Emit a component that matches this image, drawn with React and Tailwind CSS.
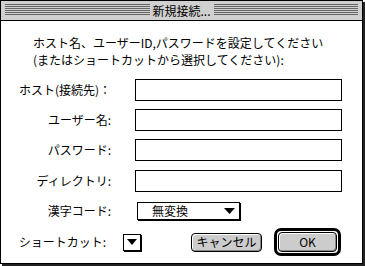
import React from "react";

const font = { fontFamily: '"Noto Sans CJK JP", "Noto Sans", sans-serif' };

function Lines() {
  return (
    <div className="flex-1 flex flex-col gap-[1px]">
      {[0, 1, 2, 3, 4, 5].map((i) => (
        <div key={i} className="h-[1px] bg-[#666666]" />
      ))}
    </div>
  );
}

function Tri({ w = 10, h = 6 }) {
  return (
    <svg width={w} height={h} viewBox={`0 0 ${w} ${h}`}>
      <polygon points={`0,0 ${w},0 ${w / 2},${h}`} fill="#000" />
    </svg>
  );
}

function Field({ label, extra = "" }) {
  return (
    <div className={`flex items-center ${extra}`}>
      <div className="w-[110px] text-right text-[12px] leading-[14px] text-black">{label}</div>
      <div className="ml-[24px] w-[207px] h-[22px] border border-black bg-white" />
    </div>
  );
}

export default function App() {
  return (
    <div className="w-[365px] h-[266px] bg-white" style={font}>
      <div className="w-[363px] h-[264px] border border-black bg-white shadow-[2px_2px_0_#222222] flex flex-col">
        <div className="h-[20px] bg-[#d0d0d0] border-b border-black flex items-start px-[4px] pt-[3px]">
          <Lines />
          <div className="px-[3px] -mt-[3px] h-[19px] flex items-center text-[12px] leading-[14px] text-black">
            新規接続...
          </div>
          <Lines />
        </div>
        <div className="flex flex-col pt-[13px]">
          <div className="pl-[32px] text-[12px] leading-[17px] text-black">
            <div>ホスト名、ユーザーID,パスワードを設定してください</div>
            <div>(またはショートカットから選択してください):</div>
          </div>
          <div className="mt-[11px] flex flex-col gap-[8px]">
            <Field label="ホスト(接続先)：" />
            <Field label="ユーザー名:" />
            <Field label="パスワード:" />
            <Field label="ディレクトリ:" extra="mt-[1px]" />
          </div>
          <div className="mt-[10px] flex items-center">
            <div className="w-[110px] text-right text-[12px] leading-[14px]">漢字コード:</div>
            <div className="ml-[26px] w-[103px] h-[18px] border border-black shadow-[1px_1px_0_#000] flex items-center pl-[14px] pr-[4px]">
              <span className="flex-1 text-[12px] leading-[14px]">無変換</span>
              <Tri w={11} h={6} />
            </div>
          </div>
          <div className="mt-[8px] flex items-center h-[28px]">
            <div className="w-[105px] text-right text-[12px] leading-[14px]">ショートカット:</div>
            <div className="ml-[17px] w-[18px] h-[17px] border border-black shadow-[1px_1px_0_#000] flex items-center justify-center">
              <Tri w={10} h={6} />
            </div>
            <div className="ml-[50px] w-[71px] h-[19px] border border-black rounded-[4px] bg-[#cccccc] shadow-[inset_1px_1px_0_#ffffff,inset_-1px_-1px_0_#888888] flex items-center justify-center text-[12px] leading-[14px]">
              キャンセル
            </div>
            <div className="ml-[12px] w-[67px] h-[28px] border-[3px] border-black rounded-[7px] p-[1px] flex">
              <div className="flex-1 border border-black rounded-[4px] bg-[#cccccc] shadow-[inset_1px_1px_0_#ffffff,inset_-1px_-1px_0_#888888] flex items-center justify-center text-[12px] leading-[14px]">
                OK
              </div>
            </div>
          </div>
        </div>
      </div>
    </div>
  );
}
